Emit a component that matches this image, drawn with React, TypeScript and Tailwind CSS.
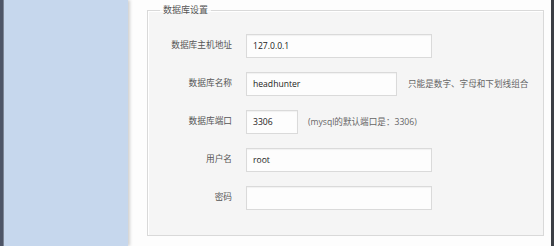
import React from 'react'

type Row = {
  label: string
  value: string
  width: string
  hint?: string
}

const rows: Row[] = [
  { label: '数据库主机地址', value: '127.0.0.1', width: 'w-[186px]' },
  { label: '数据库名称', value: 'headhunter', width: 'w-[151px]', hint: '只能是数字、字母和下划线组合' },
  { label: '数据库端口', value: '3306', width: 'w-[52px]', hint: '(mysql的默认端口是：3306)' },
  { label: '用户名', value: 'root', width: 'w-[186px]' },
  { label: '密码', value: '', width: 'w-[186px]' },
]

const FONT = "font-['Open_Sans','Noto_Sans_CJK_SC',sans-serif]"

export default function App() {
  return (
    <div className={`flex w-[554px] h-[246px] overflow-hidden bg-[#fdfdfd] ${FONT}`}>
      {/* left nav */}
      <div className="w-[4px] bg-[#4d5567] border-r border-[#7d8797]" />
      <div className="w-[124px] bg-[#c6d7ed] shadow-[2px_0_3px_rgba(0,0,0,0.18)]" />

      {/* content */}
      <div className="flex-1 pl-[19px] pr-[5px]">
        <fieldset className="mt-[3px] w-[397px] border border-[#d9d9d9] bg-[#f5f5f5] px-[10px] pt-[17px] pb-[25px] shadow-[inset_1px_1px_0_#ffffff]">
          <legend className="ml-[2px] px-[3px] text-[9px] leading-[14px] text-[#555]">数据库设置</legend>
          <div className="flex flex-col gap-[14px]">
            {rows.map(row => (
              <div key={row.label} className="flex items-center h-[24px]">
                <div className="w-[74px] text-right text-[8.7px] text-[#555]">{row.label}</div>
                <div
                  className={`ml-[14px] h-[24px] ${row.width} border border-[#dadada] bg-[#fdfdfd] shadow-[inset_0_1px_1px_rgba(0,0,0,0.05)] pl-[6px] flex items-center text-[8.6px] text-[#222]`}
                >
                  {row.value}
                </div>
                {row.hint && (
                  <div className={`${row.value === '3306' ? 'ml-[10px]' : 'ml-[11px]'} text-[8.6px] text-[#666]`}>
                    {row.hint}
                  </div>
                )}
              </div>
            ))}
          </div>
        </fieldset>
      </div>

      <div className="w-[3px] bg-[#3c3f45]" />
    </div>
  )
}
